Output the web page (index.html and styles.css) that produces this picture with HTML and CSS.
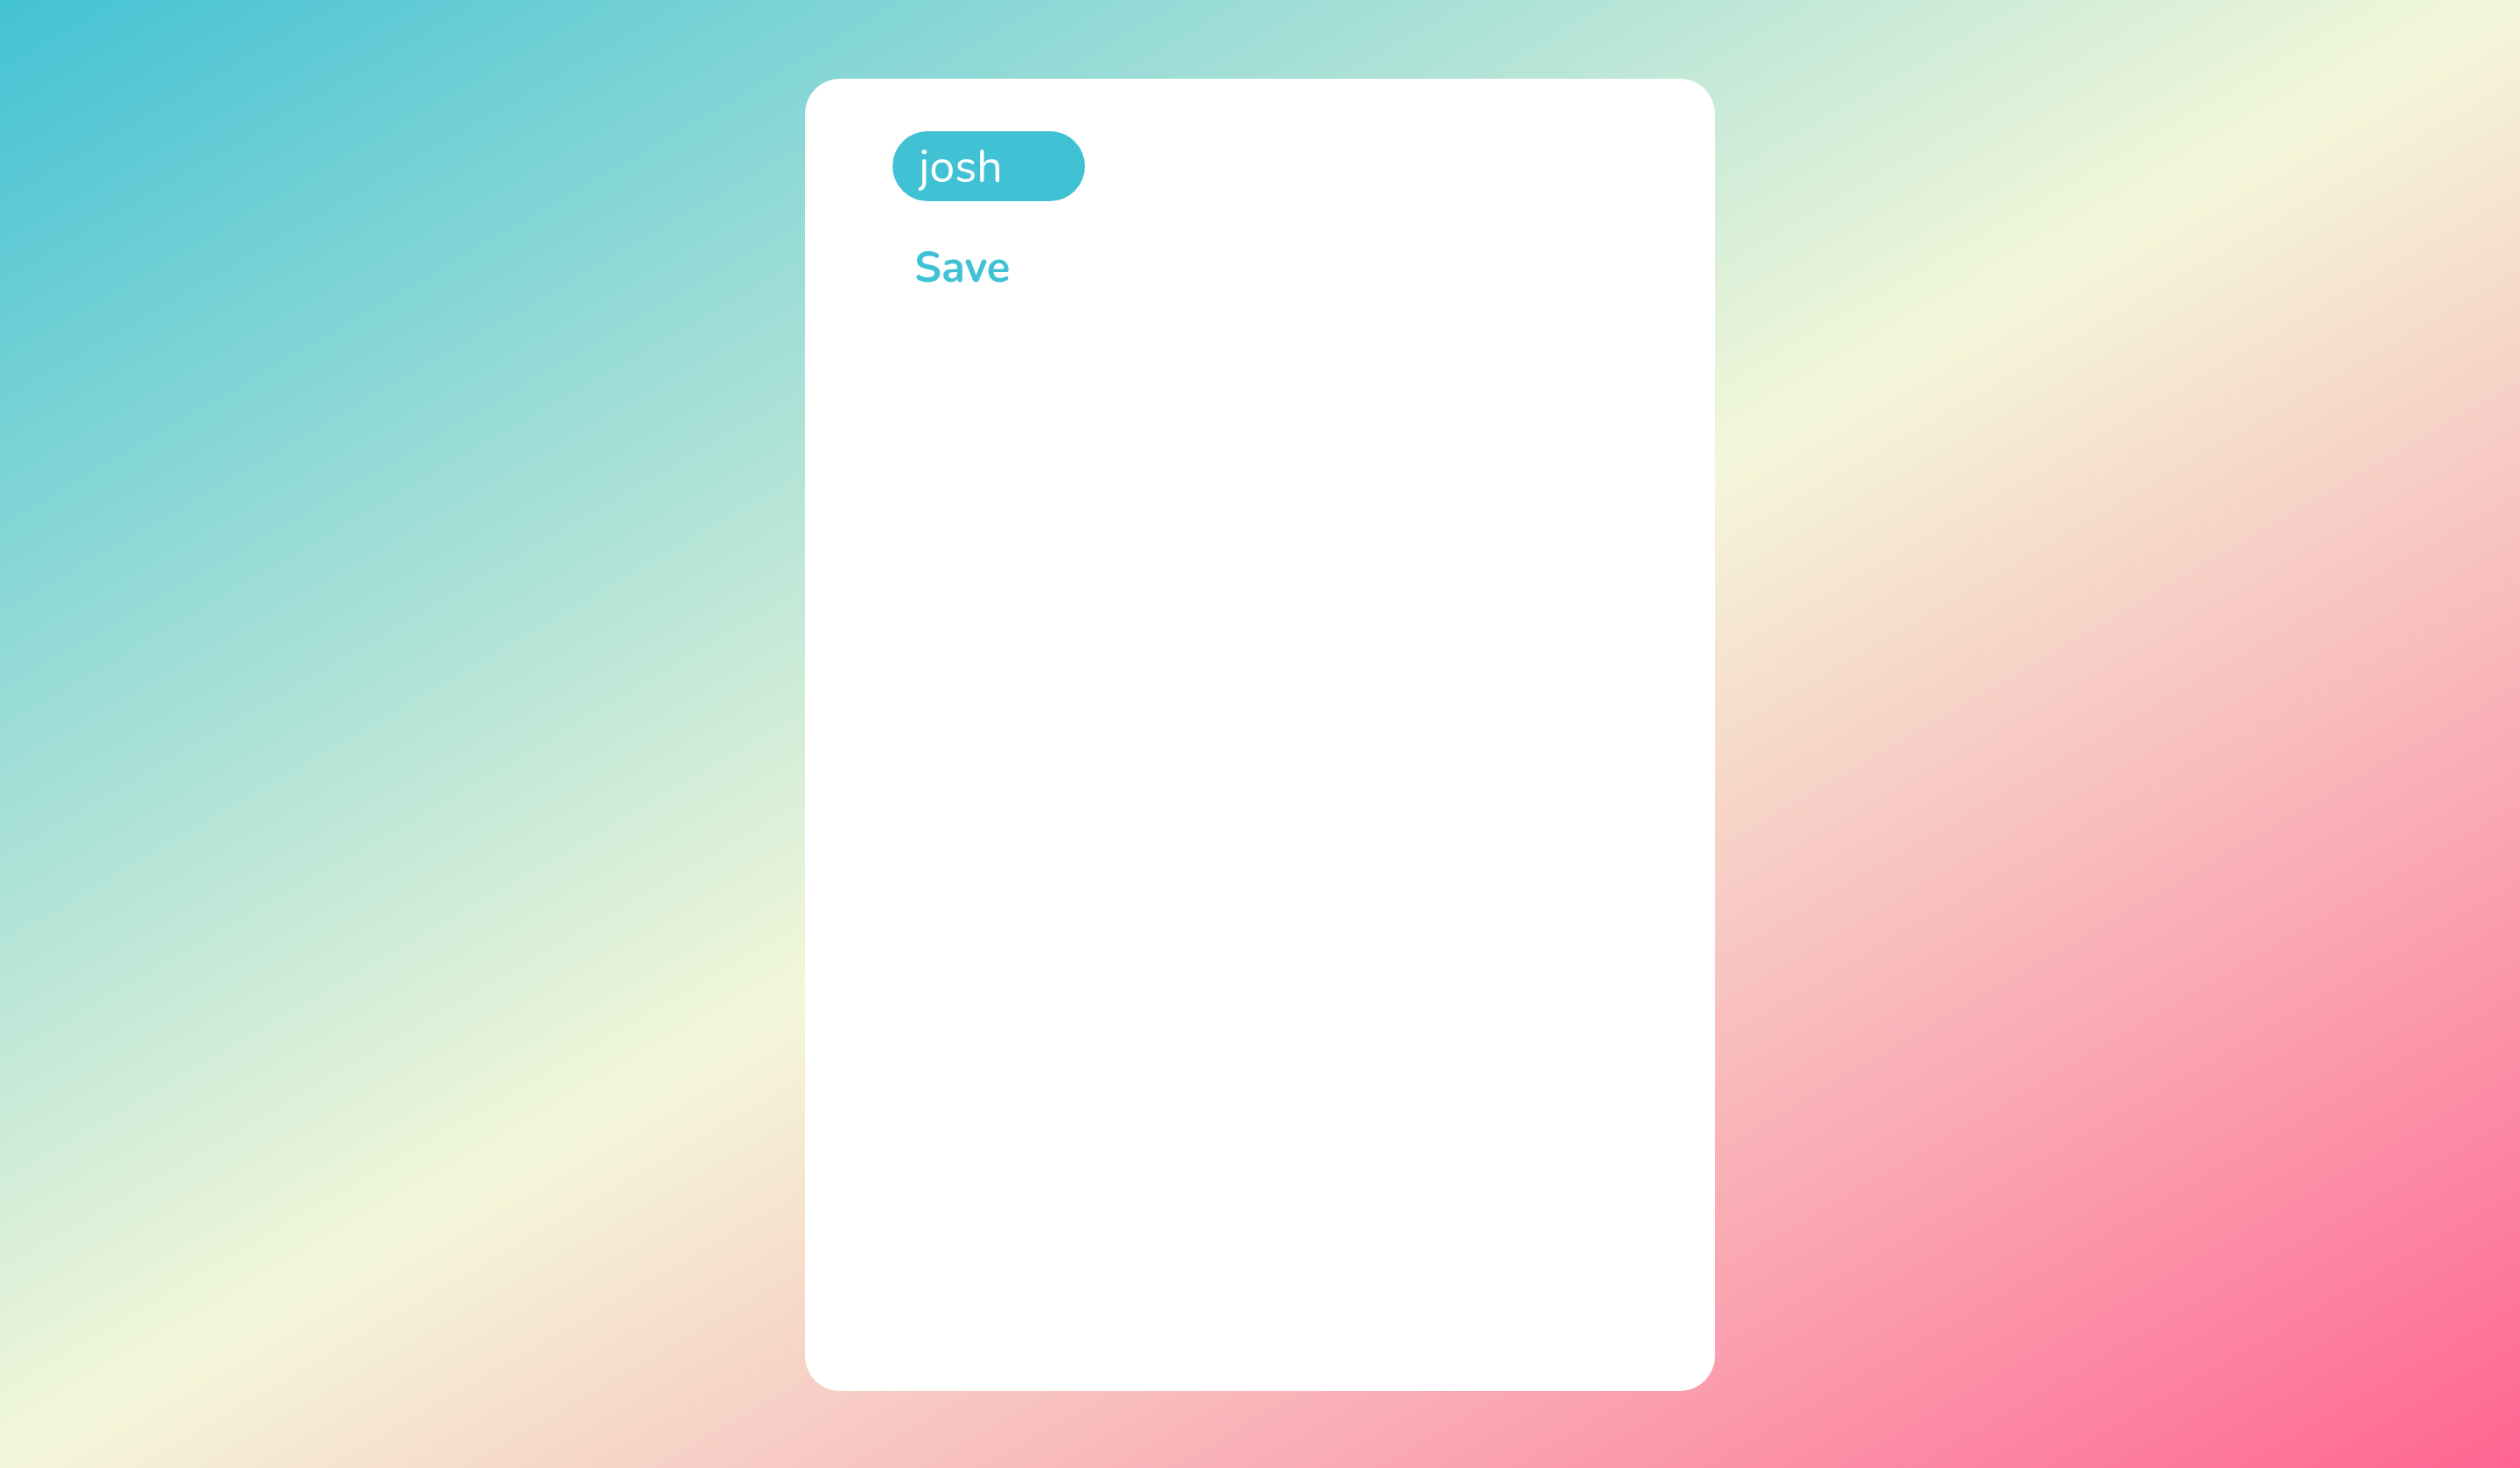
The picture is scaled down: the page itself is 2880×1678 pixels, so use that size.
FILE: index.html
```html
<!DOCTYPE html>
<html>
<head>
<meta charset="utf-8">
<link rel="stylesheet" href="styles.css">
</head>
<body>
<main class="page">
  <section class="card">
    <input class="name-input" type="text" value="josh">
    <button class="save-btn">Save</button>
  </section>
</main>
</body>
</html>
```
FILE: styles.css
```css
html, body {
  margin: 0;
  padding: 0;
  height: 100%;
}
body {
  background: linear-gradient(to bottom right, #43c2d4 0%, #f4f7d9 50%, #ff6592 100%);
  font-family: "Nunito", "Lato", "Noto Sans", sans-serif;
}
.page {
  display: flex;
  justify-content: center;
  padding-top: 90px;
  box-sizing: border-box;
  height: 100%;
}
.card {
  width: 1040px;
  height: 1500px;
  box-sizing: border-box;
  background: #ffffff;
  border-radius: 40px;
  padding: 60px 100px;
  display: flex;
  flex-direction: column;
  align-items: flex-start;
}
.name-input {
  width: 220px;
  height: 80px;
  box-sizing: border-box;
  border: none;
  outline: none;
  border-radius: 40px;
  background: #40c2d4;
  color: #ffffff;
  font-family: inherit;
  font-size: 52px;
  padding: 0 0 0 30px;
  margin: 0;
}
.save-btn {
  margin-top: 51px;
  border: none;
  background: transparent;
  color: #40c2d4;
  font-family: inherit;
  font-weight: 700;
  font-size: 49px;
  padding: 0 0 0 25px;
  line-height: 1;
  cursor: pointer;
}
```
